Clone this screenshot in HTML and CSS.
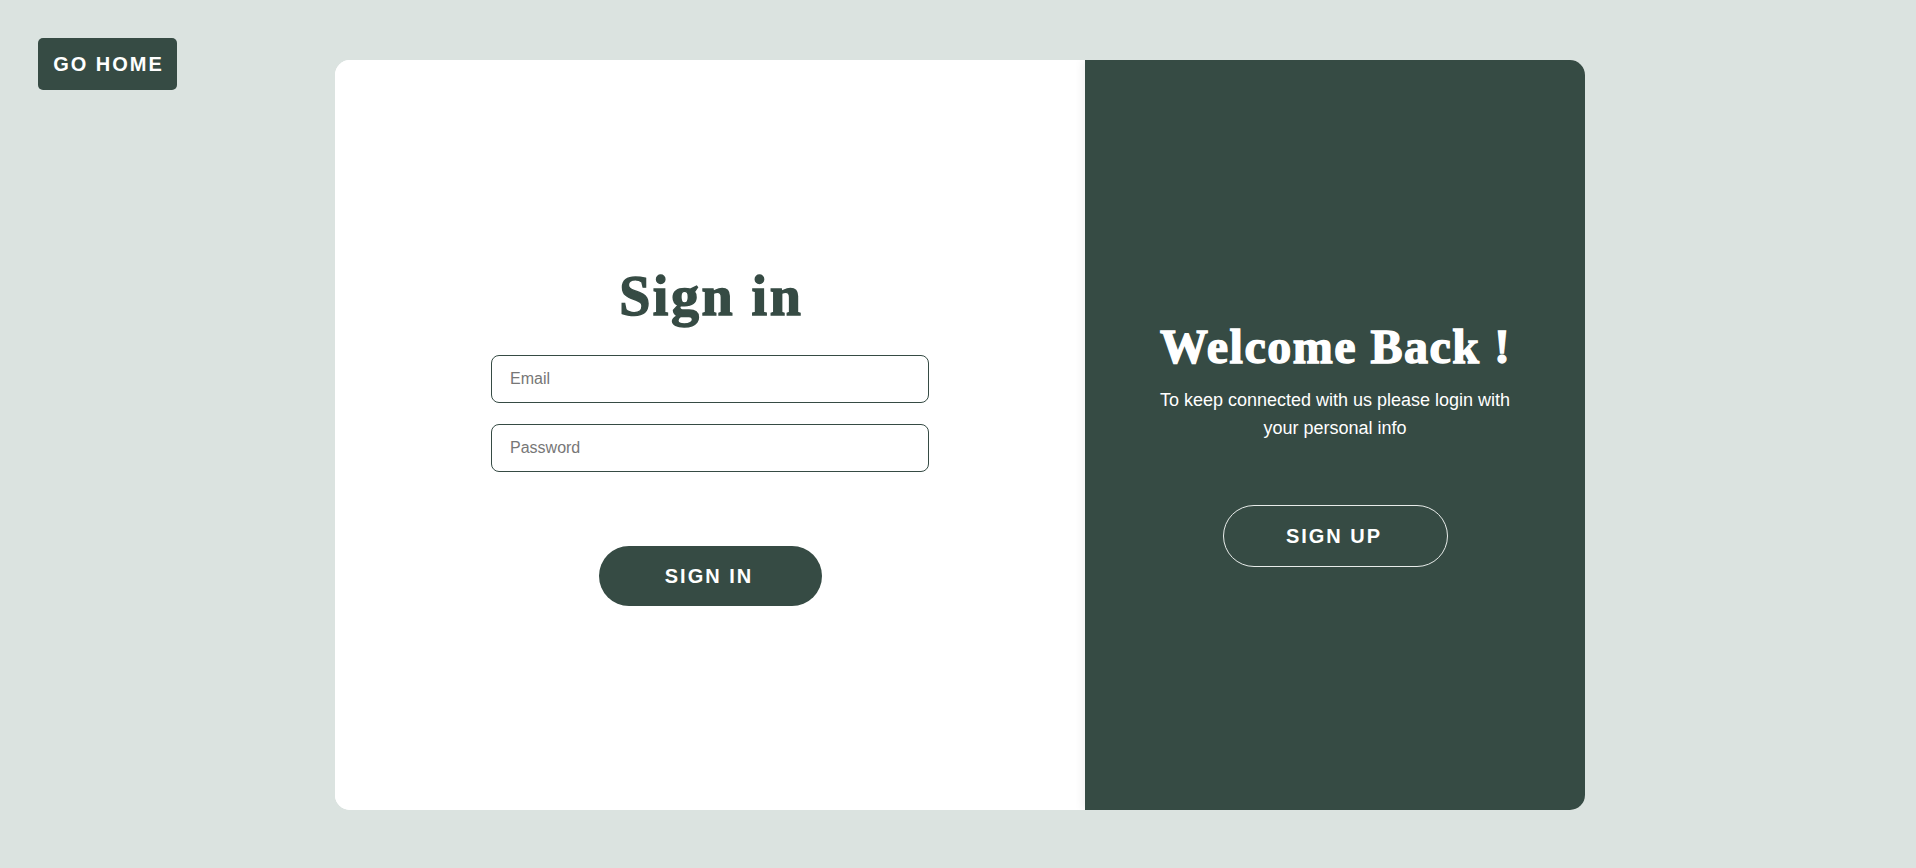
FILE: index.html
```html
<!DOCTYPE html>
<html lang="en">
<head>
<meta charset="utf-8">
<title>Sign in</title>
<link rel="stylesheet" href="styles.css">
</head>
<body>
<div class="page">
  <a class="home-btn" href="#">GO HOME</a>
  <div class="card">
    <form class="panel-form">
      <h1 class="title">Sign in</h1>
      <input class="field" type="email" placeholder="Email">
      <input class="field" type="password" placeholder="Password">
      <button class="btn-solid" type="button">SIGN IN</button>
    </form>
    <div class="panel-overlay">
      <h1 class="title title-light">Welcome Back !</h1>
      <p class="lead">To keep connected with us please login with your personal info</p>
      <button class="btn-ghost" type="button">SIGN UP</button>
    </div>
  </div>
</div>
</body>
</html>
```

FILE: styles.css
```css
* { box-sizing: border-box; }
html, body { margin: 0; padding: 0; }
body {
  background: #dbe3e0;
  font-family: "Liberation Sans", Arial, sans-serif;
  width: 1916px;
  height: 868px;
  overflow: hidden;
}
.page {
  position: relative;
  height: 868px;
  padding-top: 60px;
  display: flex;
  justify-content: flex-start;
}
.home-btn {
  position: absolute;
  left: 38px;
  top: 38px;
  width: 139px;
  height: 52px;
  display: flex;
  align-items: center;
  justify-content: center;
  background: #364b44;
  color: #fff;
  border-radius: 5px;
  font-weight: bold;
  font-size: 20px;
  letter-spacing: 2px;
  text-decoration: none;
  padding-left: 2px;
}
.card {
  margin-left: 335px;
  width: 1250px;
  height: 750px;
  display: flex;
  border-radius: 15px;
  overflow: hidden;
  background: #fff;
}
.panel-form {
  width: 750px;
  height: 100%;
  display: flex;
  flex-direction: column;
  align-items: center;
  justify-content: center;
  background: #fff;
}
.title {
  margin: 0;
  font-family: "Liberation Serif", "Times New Roman", serif;
  font-weight: bold;
  color: #364b44;
  font-size: 56px;
  line-height: 64px;
  -webkit-text-stroke: 1.4px #364b44;
  letter-spacing: 2.5px;
  padding-left: 2.5px;
}
.panel-form .title { margin-bottom: 27px; }
.field {
  width: 438px;
  height: 48px;
  border: 1px solid #364b44;
  border-radius: 8px;
  padding: 0 18px;
  font-family: "Liberation Sans", Arial, sans-serif;
  font-size: 16px;
  color: #333;
  background: #fff;
  outline: none;
}
.field::placeholder { color: #777; }
.field + .field { margin-top: 21px; }
.btn-solid {
  margin-top: 74px;
  width: 223px;
  height: 60px;
  border: none;
  border-radius: 30px;
  background: #364b44;
  color: #fff;
  font-family: "Liberation Sans", Arial, sans-serif;
  font-weight: bold;
  font-size: 20px;
  letter-spacing: 2px;
  padding-left: 4px;
}
.panel-overlay {
  width: 500px;
  height: 100%;
  background: #364b44;
  display: flex;
  flex-direction: column;
  align-items: center;
  justify-content: center;
  padding-top: 16px;
  color: #fff;
  box-shadow: -3px 0 8px rgba(0, 0, 0, 0.06);
}
.title-light {
  color: #fff;
  font-size: 48px;
  line-height: 56px;
  -webkit-text-stroke: 1.4px #fff;
  letter-spacing: 1.5px;
  padding-left: 1.5px;
}
.lead {
  margin: 11px 0 0;
  width: 370px;
  text-align: center;
  font-size: 18px;
  line-height: 28px;
}
.btn-ghost {
  margin-top: 63px;
  width: 225px;
  height: 62px;
  border: 1px solid #e8ecea;
  border-radius: 31px;
  background: transparent;
  color: #fff;
  font-family: "Liberation Sans", Arial, sans-serif;
  font-weight: bold;
  font-size: 20px;
  letter-spacing: 2px;
  padding-left: 4px;
}
```
